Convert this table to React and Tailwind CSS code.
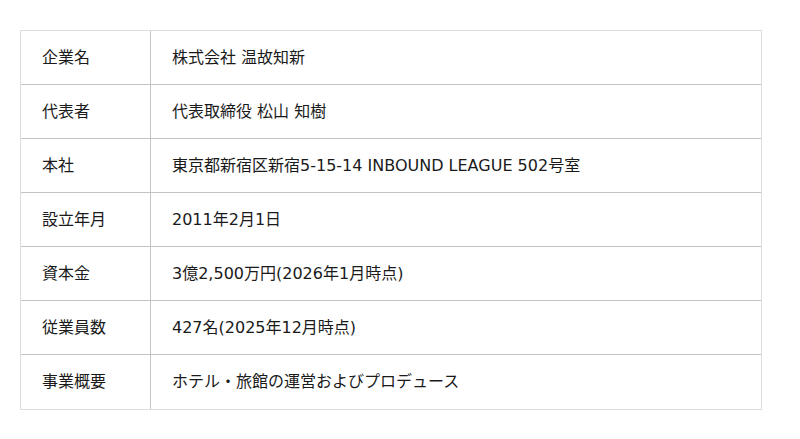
import React from "react";

const rows = [
  ["企業名", "株式会社 温故知新"],
  ["代表者", "代表取締役 松山 知樹"],
  ["本社", "東京都新宿区新宿5-15-14 INBOUND LEAGUE 502号室"],
  ["設立年月", "2011年2月1日"],
  ["資本金", "3億2,500万円(2026年1月時点)"],
  ["従業員数", "427名(2025年12月時点)"],
  ["事業概要", "ホテル・旅館の運営およびプロデュース"],
];

export default function App() {
  return (
    <div
      className="w-[800px] h-[439px] bg-white pt-[30px] pl-[20px]"
      style={{ fontFamily: '"DejaVu Sans", "Noto Sans CJK JP", sans-serif' }}
    >
      <div className="w-[742px] border border-[#dddddd] flex flex-col">
        {rows.map(([k, v], i) => (
          <div
            key={k}
            className={`flex h-[54px] ${i < rows.length - 1 ? "border-b border-[#c4c4c4]" : ""}`}
          >
            <div className="w-[130px] border-r border-[#c4c4c4] flex items-center pl-[21px] text-[16px] text-[#1a1a1a]">
              {k}
            </div>
            <div className="flex-1 flex items-center pl-[21px] text-[16px] text-[#1a1a1a]">
              {v}
            </div>
          </div>
        ))}
      </div>
    </div>
  );
}
